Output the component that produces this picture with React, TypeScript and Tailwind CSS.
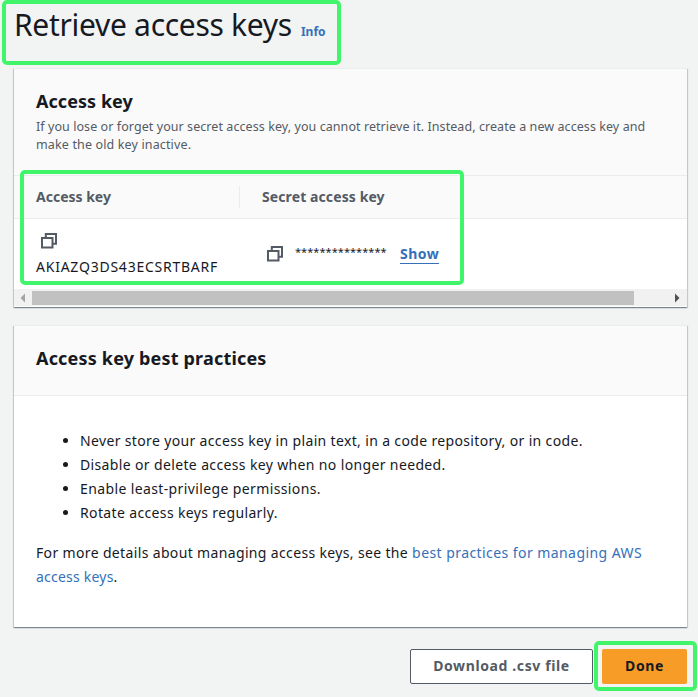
import clsx from "clsx";

const tips = [
    { text: "Never store your access key in plain text, in a code repository, or in code.", tracking: "tracking-[0.35px]" },
    { text: "Disable or delete access key when no longer needed.", tracking: "tracking-[0.36px]" },
    { text: "Enable least-privilege permissions.", tracking: "tracking-[0.38px]" },
    { text: "Rotate access keys regularly.", tracking: "tracking-[0.36px]" },
];

// Green frame drawn over a part of the page
function Highlight({ className }: { className: string }) {
    return <div className={clsx("pointer-events-none absolute rounded-[5px] border-4 border-[#41f56b]", className)} />;
}

function CopyIcon() {
    return (
        <svg className="size-4 shrink-0" viewBox="0 0 16 16" fill="none" stroke="#545b64" strokeWidth="2">
            <path d="M1 5h10.5v9.5H1z" />
            <path d="M4.8 5V1h10.2v9.7h-3.5" />
        </svg>
    );
}

function Card({ className, children }: { className?: string; children: React.ReactNode }) {
    return (
        <section
            className={clsx(
                "flex flex-col border-t border-[#eaeded] bg-white shadow-[0_1px_1px_0_rgba(0,28,36,0.3),1px_1px_1px_0_rgba(0,28,36,0.15),-1px_1px_1px_0_rgba(0,28,36,0.15)]",
                className
            )}
        >
            {children}
        </section>
    );
}

function ScrollBar() {
    return (
        <div className="flex h-[17px] items-center bg-[#f1f1f1]">
            <svg className="h-[17px] w-[18px]" viewBox="0 0 18 17" fill="#a3a3a3">
                <path d="M11 4.5v9L6.5 9z" />
            </svg>
            <div className="h-3.5 w-[602px] bg-[#c1c1c1]" />
            <svg className="ml-auto h-[17px] w-[17px]" viewBox="0 0 17 17" fill="#505050">
                <path d="M5 4.5v9L9.5 9z" />
            </svg>
        </div>
    );
}

function App() {
    return (
        <div className="relative flex h-[697px] w-[698px] flex-col overflow-hidden bg-[#f2f3f3] font-['Noto_Sans',sans-serif] whitespace-nowrap text-[#16191f]">
            <header className="flex h-[68px] items-baseline pl-3.5">
                <h1 className="text-[30px] leading-[50px] tracking-[-0.3px]">Retrieve access keys</h1>
                <a className="ml-[9px] text-xs font-bold text-[#3570b9]">Info</a>
            </header>

            <Card className="mx-3.5 h-[239px] w-[673px]">
                <div className="h-[107px] border-b border-[#eaeded] bg-[#fafafa] px-[22px] pt-[19px]">
                    <h2 className="text-lg leading-[26px] font-bold tracking-[0.05px]">Access key</h2>
                    <p className="mt-1 text-[12.5px] leading-[18px] tracking-[0.07px] text-[#545b64]">
                        If you lose or forget your secret access key, you cannot retrieve it. Instead, create a new access key and
                        <br />
                        <span className="tracking-[0.14px]">make the old key inactive.</span>
                    </p>
                </div>
                <div className="flex h-[43px] items-center border-b border-[#eaeded] bg-[#fafafa] pl-[22px] text-sm font-bold text-[#545b64]">
                    <span className="w-[203px]">Access key</span>
                    <span className="flex h-[22px] items-center border-l border-[#eaeded] pl-[22px] tracking-[0.1px]">
                        Secret access key
                    </span>
                </div>
                <div className="flex h-[70px] pl-[22px] text-sm">
                    <div className="w-[226px] pt-3.5">
                        <div className="pl-[5px]">
                            <CopyIcon />
                        </div>
                        <div className="mt-2 leading-5 tracking-[0.76px]">AKIAZQ3DS43ECSRTBARF</div>
                    </div>
                    <div className="flex h-[70px] items-center pl-[5px]">
                        <CopyIcon />
                        <span className="mb-1 ml-3 w-[91px] text-[11px] tracking-[0.05px]">***************</span>
                        <a className="ml-3.5 border-b border-[#3570b9] leading-[19px] font-bold tracking-[0.5px] text-[#3570b9]">
                            Show
                        </a>
                    </div>
                </div>
                <ScrollBar />
            </Card>

            <Card className="mx-3.5 mt-[18px] h-[302px] w-[673px]">
                <div className="h-[70px] border-b border-[#eaeded] bg-[#fafafa] pt-[19px] pl-[22px]">
                    <h2 className="text-lg leading-[26px] font-bold tracking-[0.18px]">Access key best practices</h2>
                </div>
                <div className="px-[22px] pt-[33px] text-sm leading-6">
                    <ul className="list-disc pl-11">
                        {tips.map((tip) => (
                            <li key={tip.text} className={tip.tracking}>
                                {tip.text}
                            </li>
                        ))}
                    </ul>
                    <p className="mt-4 tracking-[0.35px]">
                        For more details about managing access keys, see the{" "}
                        <a className="text-[#3570b9]">
                            <span className="tracking-[0.43px]">best practices for managing AWS</span>
                            <br />
                            <span className="tracking-[0.22px]">access keys</span>
                        </a>
                        .
                    </p>
                </div>
            </Card>

            <footer className="mt-[22px] flex justify-end gap-[9px] pr-[11px] text-sm font-bold">
                <button className="h-[35px] w-[183px] rounded-[2px] border border-[#545b64] bg-white pb-0.5 tracking-[0.62px] text-[#545b64]">
                    Download .csv file
                </button>
                <button className="h-[35px] w-[85px] rounded-[2px] bg-[#f89c28] pb-0.5 tracking-[0.6px]">Done</button>
            </footer>

            <Highlight className="top-0 left-0.5 h-[65px] w-[339px]" />
            <Highlight className="top-[170px] left-5 h-[115px] w-[444px]" />
            <Highlight className="top-[641px] left-[594px] h-[50px] w-[103px]" />
        </div>
    );
}

export default App;
